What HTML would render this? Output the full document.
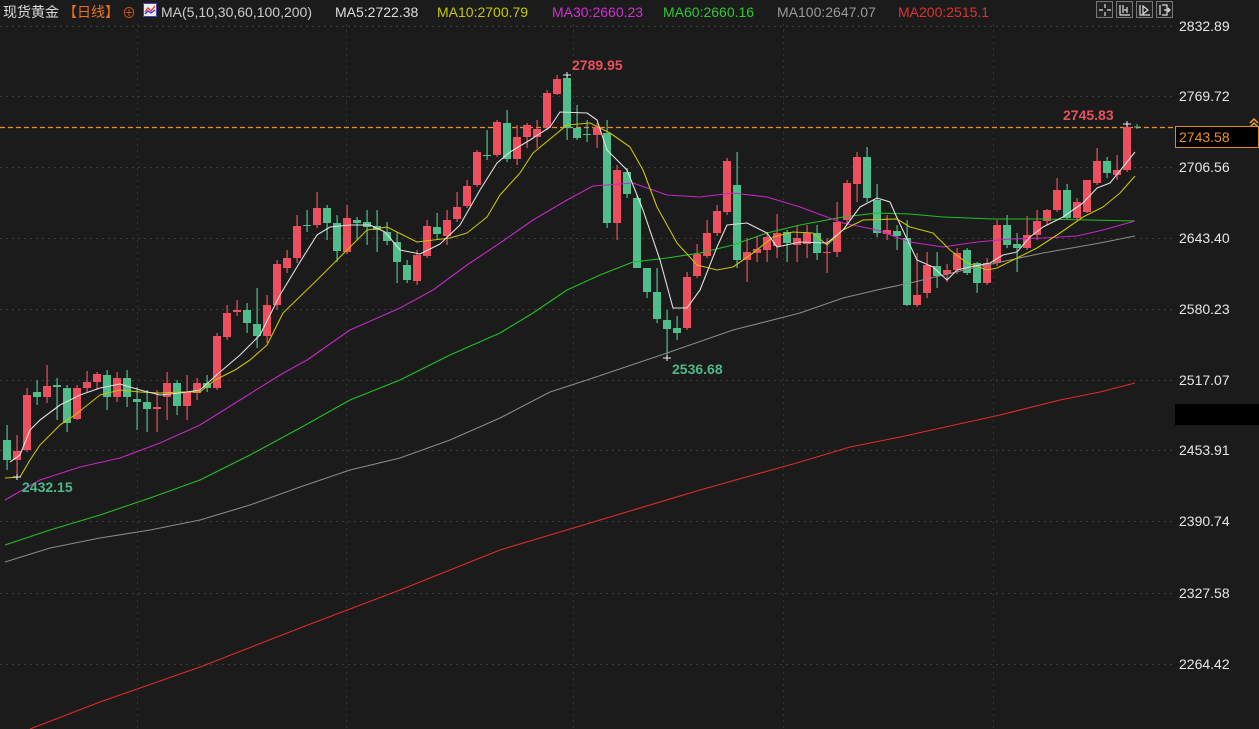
<!DOCTYPE html>
<html><head><meta charset="utf-8"><style>
html,body{margin:0;padding:0;background:#1b1b1b;width:1259px;height:729px;overflow:hidden;font-family:"Liberation Sans","Noto Sans CJK SC",sans-serif}
#c{position:absolute;left:0;top:0}
.h{position:absolute;top:3px;font-size:14px;white-space:nowrap;line-height:18px}
.ax{position:absolute;left:1179px;font-size:14px;color:#e6e6e6;line-height:16px}
.lb{position:absolute;font-size:14px;font-weight:bold;line-height:16px}
.ib{position:absolute;top:1px;width:17px;height:17px;border:1px solid #777;background:#222;box-sizing:border-box}
</style></head><body>
<svg id="c" width="1259" height="729" xmlns="http://www.w3.org/2000/svg"></svg>
<div class="h" style="left:3px;color:#ddd">现货黄金</div>
<div class="h" style="left:63px;color:#e8731c">【日线】</div>
<div class="h" style="left:122px;top:4px;color:#c8501c;font-size:14px">⊕</div>
<svg style="position:absolute;left:143px;top:3px" width="14" height="14"><rect x="0.5" y="0.5" width="13" height="13" fill="#eee" stroke="#44a"/><polyline points="2,9 5,5 8,8 12,3" fill="none" stroke="#e33" stroke-width="1.3"/><polyline points="2,11 5,8 8,10 12,7" fill="none" stroke="#33e" stroke-width="1.3"/></svg>
<div class="h" style="left:161px;color:#ccc">MA(5,10,30,60,100,200)</div>
<div class="h" style="left:335px;color:#ddd">MA5:2722.38</div>
<div class="h" style="left:437px;color:#c8c800">MA10:2700.79</div>
<div class="h" style="left:552px;color:#d030d0">MA30:2660.23</div>
<div class="h" style="left:663px;color:#30c830">MA60:2660.16</div>
<div class="h" style="left:777px;color:#9a9a9a">MA100:2647.07</div>
<div class="h" style="left:898px;color:#e03030">MA200:2515.1</div>
<div class="ib" style="left:1096px"></div><div class="ib" style="left:1116px"></div><div class="ib" style="left:1136px"></div><div class="ib" style="left:1156px"></div>
<svg style="position:absolute;left:1096px;top:1px" width="78" height="18" fill="none" stroke="#ddd" stroke-width="1.2">
<path d="M9 3v4M9 11v4M3 9h4M11 9h4"/>
<path d="M24 4v10h10M27 4v8M31 6v6M28 9h3"/>
<path d="M44 4v10h10M47 5v8l5-4z"/>
<path d="M64 4v10M66 4h5v10h-5M68 9h6M72 7l2 2-2 2"/>
</svg>
<div class="ax" style="top:18px">2832.89</div>
<div class="ax" style="top:88px">2769.72</div>
<div class="ax" style="top:159px">2706.56</div>
<div class="ax" style="top:230px">2643.40</div>
<div class="ax" style="top:301px">2580.23</div>
<div class="ax" style="top:372px">2517.07</div>
<div class="ax" style="top:442px">2453.91</div>
<div class="ax" style="top:513px">2390.74</div>
<div class="ax" style="top:585px">2327.58</div>
<div class="ax" style="top:656px">2264.42</div>
<div style="position:absolute;left:1175px;top:404px;width:84px;height:21px;background:#000"></div>
<div style="position:absolute;left:1175px;top:126px;width:84px;height:22px;background:#000;border:1px solid #e08a20;box-sizing:border-box;color:#f09020;font-size:14px;line-height:20px;padding-left:3px">2743.58</div>
<div class="lb" style="left:572px;top:57px;color:#e8505c">2789.95</div>
<div class="lb" style="left:672px;top:361px;color:#4db88a">2536.68</div>
<div class="lb" style="left:22px;top:479px;color:#4db88a">2432.15</div>
<div class="lb" style="left:1063px;top:107px;color:#e8505c">2745.83</div>
<script>
var s=document.getElementById('c'),h='';
[26,96,167,238,309,380,450,521,593,664].forEach(function(y){h+='<line x1="0" y1="'+(y+.5)+'" x2="1172" y2="'+(y+.5)+'" stroke="#3a3a3a" stroke-dasharray="2 4"/>';});
[137,346,573,783,993].forEach(function(x){h+='<line x1="'+(x+.5)+'" y1="24" x2="'+(x+.5)+'" y2="729" stroke="#333" stroke-dasharray="2 4"/>';});
h+='<line x1="0" y1="127.5" x2="1175" y2="127.5" stroke="#e09030" stroke-width="1.2" stroke-dasharray="5 3"/>';
h+='<path d="M1250 123l4-4 4 4M1250 127l4-4 4 4" stroke="#f0a030" fill="none" stroke-width="1.5"/>';
var d="g 440 460 425 470|r 451 460 435 477|r 395 450 388 452|g 392 397 380 405|r 386 397 365 403|g 385 387 378 420|g 388 423 385 432|r 388 419 385 420|r 382 388 371 392|r 374 382 372 390|g 375 397 370 410|r 378 397 372 402|g 378 397 370 407|g 399 402 387 430|g 402 409 390 432|r 407 409 390 432|r 383 397 372 420|g 383 406 380 415|r 392 406 375 420|r 383 393 378 400|g 383 388 375 392|r 336 388 333 390|r 313 337 305 340|r 310 312 300 316|g 310 323 303 333|g 324 336 288 348|r 305 336 295 343|r 264 305 260 310|r 258 268 250 273|r 226 258 215 263|g 225 226 210 232|r 208 225 192 228|g 208 223 205 240|g 223 251 215 262|r 218 252 205 254|g 220 223 217 240|g 222 227 210 245|g 226 230 210 252|g 232 241 222 245|g 242 262 232 283|g 265 280 260 283|r 255 281 250 285|r 226 256 220 258|g 227 234 213 240|r 220 236 210 245|r 207 219 192 222|r 186 206 180 208|r 152 185 150 187|g 155 156 130 160|r 122 155 120 157|g 123 159 110 162|r 137 159 125 165|r 125 137 123 148|r 129 137 120 148|r 93 128 90 130|r 79 94 75 95|g 78 128 75 140|g 128 138 105 140|g 134 135 120 142|r 127 135 123 148|g 133 223 120 228|r 170 223 165 240|g 172 194 168 198|g 198 268 195 268|g 268 292 268 298|g 292 319 268 323|g 320 329 310 358|g 328 333 316 340|r 277 328 272 330|r 254 276 244 278|r 233 256 220 258|r 211 233 205 236|r 161 212 158 215|g 185 260 152 268|r 252 260 238 282|r 249 253 237 262|r 237 250 232 262|r 233 246 214 258|g 232 243 230 262|r 238 245 225 262|r 233 244 225 258|g 233 253 225 260|r 252 253 238 273|r 222 252 202 257|r 183 220 180 225|r 157 184 152 202|g 157 198 147 202|g 200 233 184 237|r 230 234 215 240|g 231 236 225 250|g 238 305 220 306|r 295 305 253 307|r 265 293 252 298|g 266 276 252 288|r 270 274 264 282|r 253 270 248 274|g 250 273 248 275|g 263 283 262 293|r 263 283 258 285|r 225 263 220 266|g 225 245 215 248|g 244 248 233 272|r 235 248 216 250|r 221 235 210 240|r 210 221 209 225|r 190 210 178 212|g 190 218 184 220|r 202 218 198 220|r 180 212 180 213|r 161 183 148 185|g 161 173 157 178|r 170 175 155 180|r 127 170 124 172".split('|');
d.forEach(function(e,i){var a=e.split(' '),c=a[0]=='r'?'#ee4f5f':'#4fbe8c',t=+a[1],b=+a[2],hi=+a[3],lo=+a[4],x=7+10*i;if(b-t<1)b=t+1;
h+='<rect x="'+(x-0.5)+'" y="'+hi+'" width="1.2" height="'+(lo-hi)+'" fill="'+c+'"/><rect x="'+(x-4)+'" y="'+t+'" width="8" height="'+(b-t)+'" fill="'+c+'"/>';});
h+='<line x1="1137" y1="124" x2="1137" y2="129" stroke="#4fbe8c"/><line x1="1134" y1="127" x2="1140" y2="127" stroke="#4fbe8c"/>';
function pl(p,c,w){h+='<polyline fill="none" stroke="'+c+'" stroke-width="'+(w||1.1)+'" stroke-linejoin="round" points="'+p+'"/>';}
pl("30,729 100,702 200,667 300,628 400,590 500,550 600,520 700,490 800,462 850,447 900,437 1000,415 1060,400 1100,392 1135,383","#e02a2a");
pl("5,562 50,548 100,538 150,530 200,520 250,505 300,487 350,470 400,458 450,440 500,418 550,392 587,380 667,353 733,330 800,313 843,298 877,290 910,283 977,267 1043,253 1100,243 1135,236","#8a8a8a");
pl("5,545 50,530 100,515 150,498 200,480 250,455 300,428 350,400 400,380 450,355 500,333 533,313 567,290 600,275 633,262 667,258 700,253 733,245 767,233 800,225 843,217 877,213 910,214 943,217 993,219 1043,219 1135,221","#22c022");
pl("5,500 40,480 80,467 120,458 160,443 200,425 240,400 280,375 307,360 350,330 400,308 433,290 467,265 500,243 533,220 567,200 593,186 633,183 667,195 700,197 733,193 767,197 800,207 843,223 877,230 910,242 943,247 977,242 1010,239 1043,238 1077,236 1103,230 1135,221","#c428c4");
pl("5,478 20,477 30,460 40,445 60,425 75,415 100,395 120,390 140,392 160,393 180,392 200,392 215,380 235,370 250,360 267,345 283,313 317,280 340,257 367,230 387,227 417,242 450,238 467,233 487,217 500,195 520,173 533,153 567,125 590,123 610,133 630,147 643,170 657,207 677,243 697,265 717,270 733,267 753,253 773,237 793,232 813,233 827,245 843,230 863,220 897,219 910,227 933,233 950,250 967,263 987,270 997,268 1017,258 1037,248 1060,233 1083,217 1103,207 1120,193 1135,176","#c8c400");
pl("10,462 20,455 30,430 40,420 60,405 80,395 100,388 120,384 140,390 160,395 180,393 200,390 220,372 240,355 260,335 280,295 300,262 317,235 330,227 350,225 370,225 385,232 400,250 420,254 440,244 460,225 480,190 497,163 510,152 530,140 550,127 560,112 587,113 597,120 607,150 627,170 643,210 660,260 673,308 687,308 700,290 717,247 727,225 747,223 767,233 777,247 800,242 827,243 843,230 860,207 877,198 890,202 898,220 917,260 933,267 947,280 957,270 970,267 990,263 1003,255 1017,252 1030,237 1043,227 1063,217 1083,203 1097,188 1110,183 1123,167 1135,152","#e0e0e0");
[[17,477],[567,75],[667,358],[1127,124]].forEach(function(p){h+='<path d="M'+(p[0]-4)+' '+p[1]+'h8M'+p[0]+' '+(p[1]-3)+'v6" stroke="#eee"/>';});
s.innerHTML=h;
</script>
</body></html>
